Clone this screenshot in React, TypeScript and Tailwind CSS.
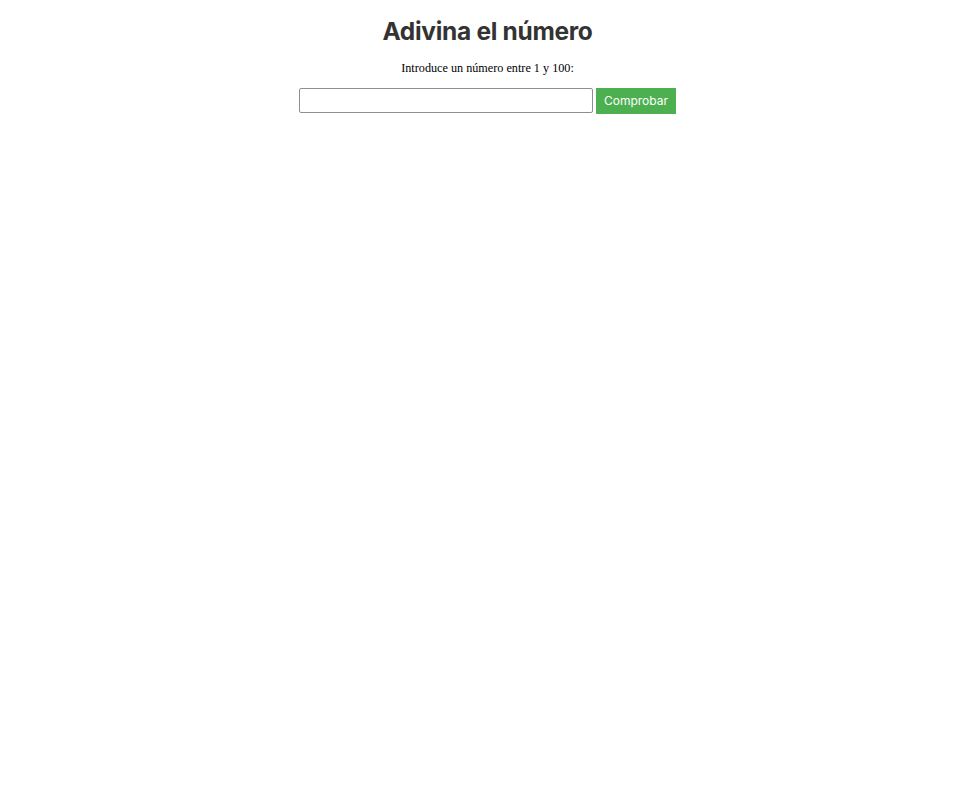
import React, { useState } from 'react';

const App: React.FC = () => {
  const [guess, setGuess] = useState('');

  return (
    <div className="flex flex-col items-center bg-white min-h-[792px]">
      <h1 className="mt-[16px] text-[24.5px] leading-[30px] font-bold tracking-[-0.3px] text-[#333333] font-['Inter',sans-serif]">
        Adivina el número
      </h1>
      <p className="mt-[14px] text-[12.2px] leading-[16px] text-black font-['Liberation_Serif',serif]">
        Introduce un número entre 1 y 100:
      </p>
      <div className="mt-[12px] flex items-start gap-[3px]">
        <input
          type="number"
          value={guess}
          onChange={(e) => setGuess(e.target.value)}
          className="w-[294px] h-[25px] border border-[#8f8f8f] rounded-[2px] px-1 text-[13px] outline-none"
        />
        <button className="w-[80px] h-[26px] bg-[#4caf50] text-white text-[12px] font-['Inter',sans-serif]">
          Comprobar
        </button>
      </div>
    </div>
  );
};

export default App;
